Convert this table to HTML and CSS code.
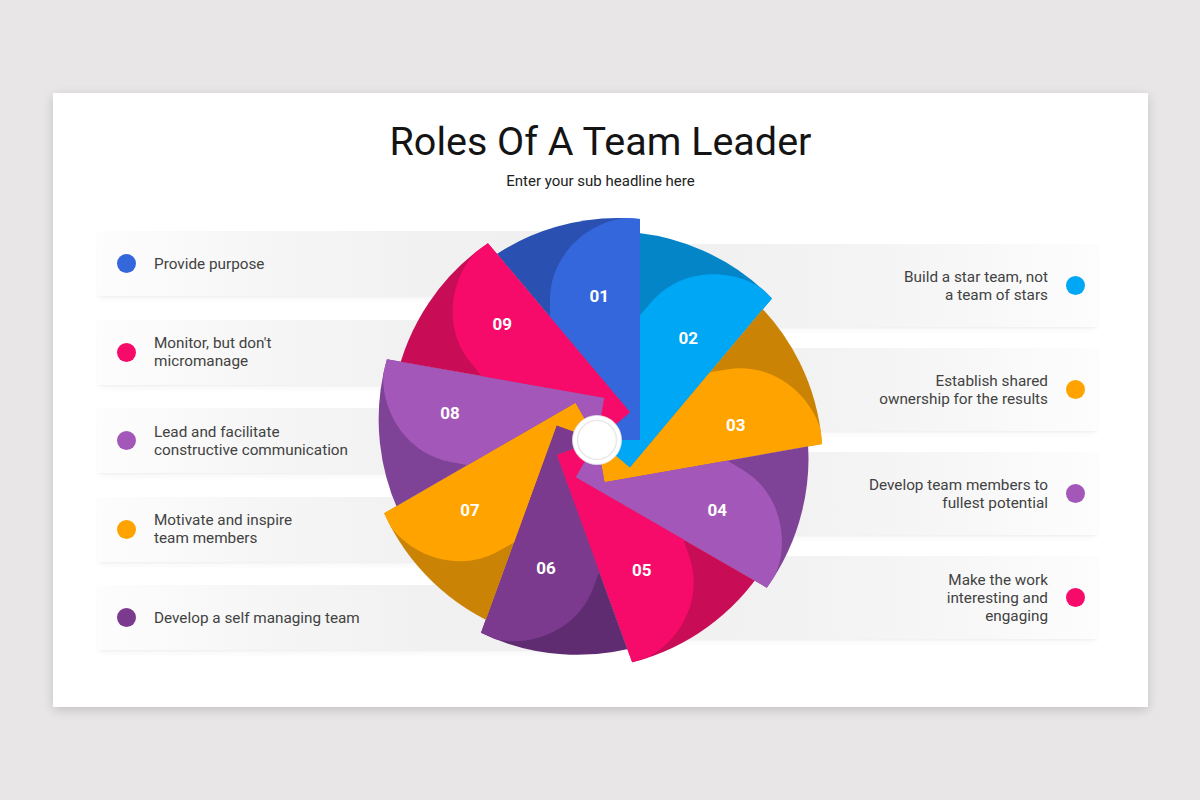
FILE: index.html
```html
<!DOCTYPE html>
<html lang="en">
<head>
<meta charset="utf-8">
<title>Roles Of A Team Leader</title>
<link rel="stylesheet" href="styles.css">
</head>
<body>
<div class="page">
  <div class="card">
    <header class="header">
      <h1 class="title">Roles Of A Team Leader</h1>
      <p class="subtitle">Enter your sub headline here</p>
    </header>
    <div class="lists">
      <ul class="list list-left">
        <li class="row row-left"><span class="dot c-blue"></span><span class="txt">Provide purpose</span></li>
        <li class="row row-left"><span class="dot c-pink"></span><span class="txt">Monitor, but don't<br>micromanage</span></li>
        <li class="row row-left"><span class="dot c-purple"></span><span class="txt">Lead and facilitate<br>constructive communication</span></li>
        <li class="row row-left"><span class="dot c-orange"></span><span class="txt">Motivate and inspire<br>team members</span></li>
        <li class="row row-left"><span class="dot c-plum"></span><span class="txt">Develop a self managing team</span></li>
      </ul>
      <ul class="list list-right">
        <li class="row row-right"><span class="txt">Build a star team, not<br>a team of stars</span><span class="dot c-cyan"></span></li>
        <li class="row row-right"><span class="txt">Establish shared<br>ownership for the results</span><span class="dot c-orange"></span></li>
        <li class="row row-right"><span class="txt">Develop team members to<br>fullest potential</span><span class="dot c-purple"></span></li>
        <li class="row row-right"><span class="txt">Make the work<br>interesting and<br>engaging</span><span class="dot c-pink"></span></li>
      </ul>
    </div>

    <svg class="pie" viewBox="-240 -240 480 480" width="480" height="480" aria-hidden="true">
      <defs>
        <clipPath id="cut" clipPathUnits="userSpaceOnUse">
          <polygon points="32.93,-27.64 -352.8,-487.2 106.8,-872.9 878.2,46.3 -41,817.7 -426.7,358.1"/>
        </clipPath>
        <path id="bladeDark" d="M43 0 L43 -220.9 A222 222 0 0 0 -115.7 -174.9 L0 0 Z"/>
        <path id="bladeLight" d="M43 0 L43 -220.9 A222 222 0 0 0 28 -221.9 C-8 -218 -47 -186 -47 -140 L-48 -60 L0 0 Z"/>
      </defs>

      <g transform="rotate(0)"><g clip-path="url(#cut)"><use href="#bladeDark" fill="#2a50b1"/><use href="#bladeLight" fill="#3567dc"/></g></g>
      <g transform="rotate(40)"><g clip-path="url(#cut)"><use href="#bladeDark" fill="#0385c8"/><use href="#bladeLight" fill="#00a7f5"/></g></g>
      <g transform="rotate(80)"><g clip-path="url(#cut)"><use href="#bladeDark" fill="#ca8305"/><use href="#bladeLight" fill="#ffa300"/></g></g>
      <g transform="rotate(120)"><g clip-path="url(#cut)"><use href="#bladeDark" fill="#7e4396"/><use href="#bladeLight" fill="#a358b9"/></g></g>
      <g transform="rotate(160)"><g clip-path="url(#cut)"><use href="#bladeDark" fill="#c90c56"/><use href="#bladeLight" fill="#f60b6a"/></g></g>
      <g transform="rotate(200)"><g clip-path="url(#cut)"><use href="#bladeDark" fill="#5f2c71"/><use href="#bladeLight" fill="#7b3a8e"/></g></g>
      <g transform="rotate(240)"><g clip-path="url(#cut)"><use href="#bladeDark" fill="#ca8305"/><use href="#bladeLight" fill="#ffa300"/></g></g>
      <g transform="rotate(280)"><g clip-path="url(#cut)"><use href="#bladeDark" fill="#7e4396"/><use href="#bladeLight" fill="#a358b9"/></g></g>
      <g transform="rotate(320)"><g clip-path="url(#cut)"><use href="#bladeDark" fill="#c90c56"/><use href="#bladeLight" fill="#f60b6a"/></g></g>

      <circle class="hub" r="24.5"/>
      <circle class="hub-ring" r="19.5"/>

      <text class="num" x="2.3" y="-144">01</text>
      <text class="num" x="91.3" y="-102.3">02</text>
      <text class="num" x="138.7" y="-15">03</text>
      <text class="num" x="120.3" y="70">04</text>
      <text class="num" x="44.7" y="130">05</text>
      <text class="num" x="-51" y="128.3">06</text>
      <text class="num" x="-127" y="70">07</text>
      <text class="num" x="-147" y="-26.7">08</text>
      <text class="num" x="-94.7" y="-116">09</text>
    </svg>
  </div>
</div>
</body>
</html>
```

FILE: styles.css
```css
html, body {
  margin: 0;
  padding: 0;
}

body {
  background: #e8e6e7;
  font-family: "Roboto", "Liberation Sans", sans-serif;
  width: 1200px;
  height: 800px;
  overflow: hidden;
}

.page {
  padding: 93px 0 0 53px;
}

.card {
  position: relative;
  width: 1095px;
  height: 614px;
  box-sizing: border-box;
  padding-top: 25px;
  background: #ffffff;
  box-shadow: 0 3px 10px rgba(0, 0, 0, 0.16);
}

.header {
  text-align: center;
}

.title {
  margin: 0;
  font-size: 39.5px;
  line-height: 47px;
  font-weight: 400;
  color: #141414;
}

.subtitle {
  margin: 7px 0 0;
  font-size: 15px;
  line-height: 18px;
  color: #222222;
}

.lists {
  display: flex;
  justify-content: space-between;
  align-items: flex-start;
  padding: 0 50px 0 44px;
  margin-top: 41px;
}

.list {
  list-style: none;
  margin: 0;
  padding: 0;
  display: flex;
  flex-direction: column;
}

.list-left {
  width: 463px;
  gap: 23.5px;
}

.list-right {
  width: 457px;
  gap: 21px;
  margin-top: 13px;
}

.row {
  display: flex;
  align-items: center;
  box-sizing: border-box;
  font-size: 15.3px;
  line-height: 18px;
  color: #424242;
  box-shadow: 0 5px 7px -3px rgba(0, 0, 0, 0.05), 0 1px 2px rgba(0, 0, 0, 0.03);
}

.row-left {
  height: 65px;
  padding-left: 20px;
  gap: 18px;
  background: linear-gradient(to right, #fdfdfd 0%, #f6f6f6 35%, #f1f1f1 70%, #f0f0f0 100%);
}

.row-right {
  height: 83px;
  justify-content: flex-end;
  padding-right: 13.5px;
  gap: 17.5px;
  text-align: right;
  background: linear-gradient(to left, #fdfdfd 0%, #f7f7f7 30%, #f2f2f2 65%, #f0f0f0 100%);
}

.dot {
  flex: none;
  width: 19px;
  height: 19px;
  border-radius: 50%;
}

.c-blue { background: #3567dc; }
.c-pink { background: #f60b6a; }
.c-purple { background: #a358b9; }
.c-orange { background: #ffa300; }
.c-plum { background: #7b3a8e; }
.c-cyan { background: #00a7f5; }

.pie {
  position: absolute;
  left: 304px;
  top: 107px;
  width: 480px;
  height: 480px;
  overflow: visible;
}

.hub {
  fill: #ffffff;
  stroke: #e2e2e2;
  stroke-width: 0.8;
}

.hub-ring {
  fill: none;
  stroke: #e9e9e9;
  stroke-width: 1.6;
}

.num {
  font-family: "Roboto", "Liberation Sans", sans-serif;
  font-weight: 700;
  font-size: 17px;
  fill: #ffffff;
  text-anchor: middle;
  dominant-baseline: central;
}
```
